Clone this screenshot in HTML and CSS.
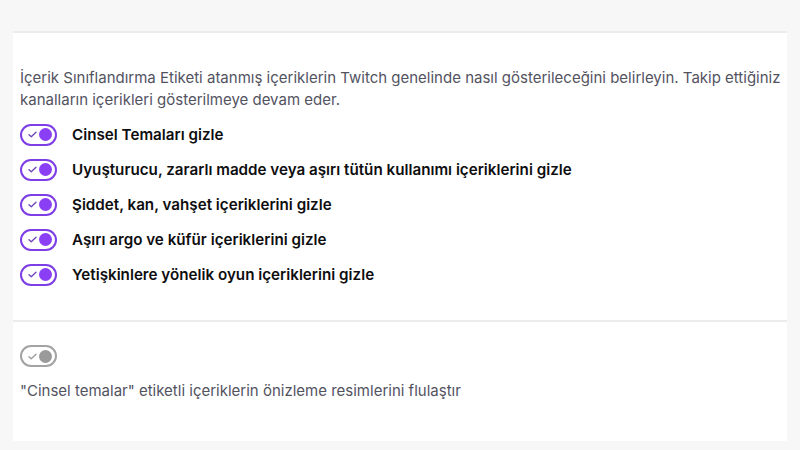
FILE: index.html
```html
<!DOCTYPE html>
<html lang="tr">
<head>
    <meta charset="UTF-8">
    <meta name="viewport" content="width=device-width, initial-scale=1.0">
    <title>İçerik Sınıflandırma Etiketleri</title>
    <link rel="stylesheet" href="styles.css">
</head>
<body>
    <div class="card">
        <section class="section">
            <p class="desc">İçerik Sınıflandırma Etiketi atanmış içeriklerin Twitch genelinde nasıl gösterileceğini belirleyin. Takip ettiğiniz kanalların içerikleri gösterilmeye devam eder.</p>

            <ul class="toggle-list">
                <li class="toggle-row">
                    <span class="toggle on">
                        <svg class="check" viewBox="0 0 10 8"><path d="M1 4.2 L3.6 6.6 L9 1.4"/></svg>
                        <span class="knob"></span>
                    </span>
                    <span class="label">Cinsel Temaları gizle</span>
                </li>
                <li class="toggle-row">
                    <span class="toggle on">
                        <svg class="check" viewBox="0 0 10 8"><path d="M1 4.2 L3.6 6.6 L9 1.4"/></svg>
                        <span class="knob"></span>
                    </span>
                    <span class="label">Uyuşturucu, zararlı madde veya aşırı tütün kullanımı içeriklerini gizle</span>
                </li>
                <li class="toggle-row">
                    <span class="toggle on">
                        <svg class="check" viewBox="0 0 10 8"><path d="M1 4.2 L3.6 6.6 L9 1.4"/></svg>
                        <span class="knob"></span>
                    </span>
                    <span class="label">Şiddet, kan, vahşet içeriklerini gizle</span>
                </li>
                <li class="toggle-row">
                    <span class="toggle on">
                        <svg class="check" viewBox="0 0 10 8"><path d="M1 4.2 L3.6 6.6 L9 1.4"/></svg>
                        <span class="knob"></span>
                    </span>
                    <span class="label">Aşırı argo ve küfür içeriklerini gizle</span>
                </li>
                <li class="toggle-row">
                    <span class="toggle on">
                        <svg class="check" viewBox="0 0 10 8"><path d="M1 4.2 L3.6 6.6 L9 1.4"/></svg>
                        <span class="knob"></span>
                    </span>
                    <span class="label">Yetişkinlere yönelik oyun içeriklerini gizle</span>
                </li>
            </ul>
        </section>

        <section class="section blur-section">
            <span class="toggle disabled">
                <svg class="check" viewBox="0 0 10 8"><path d="M1 4.2 L3.6 6.6 L9 1.4"/></svg>
                <span class="knob"></span>
            </span>
            <p class="desc">"Cinsel temalar" etiketli içeriklerin önizleme resimlerini flulaştır</p>
        </section>
    </div>
</body>
</html>
```

FILE: styles.css
```css
body {
    margin: 0;
    background-color: #f7f7f8;
    font-family: Inter, "Noto Sans", sans-serif;
    font-size: 14px;
    color: #0e0e10;
}
.card {
    margin: 31px 13px 0 13px;
    background-color: #fff;
    border-top: 2px solid #ececec;
    height: 408px;
}
.section {
    padding: 34px 0 28px 7px;
}
.desc {
    margin: 0;
    font-size: 15px;
    line-height: 22px;
    color: #53535f;
}
.toggle-list {
    list-style: none;
    margin: 6px 0 0;
    padding: 0;
}
.toggle-row {
    display: flex;
    align-items: center;
    height: 35px;
}
.label {
    margin-left: 15px;
    font-size: 15.2px;
    font-weight: 600;
    color: #0e0e10;
}
.toggle {
    display: flex;
    align-items: center;
    justify-content: space-between;
    box-sizing: border-box;
    width: 37px;
    height: 22px;
    padding: 0 3px 0 6px;
    border: 2px solid #7d3ee6;
    border-radius: 11px;
    flex-shrink: 0;
}
.check {
    width: 9px;
    height: 7px;
    fill: none;
    stroke: #6e45b8;
    stroke-width: 1.5;
    stroke-linecap: round;
    stroke-linejoin: round;
}
.knob {
    width: 13px;
    height: 13px;
    border-radius: 50%;
    background-color: #8a3ff5;
}
.blur-section {
    border-top: 2px solid #ececec;
    padding-top: 23px;
}
.blur-section .toggle {
    border-color: #a3a3a3;
    margin-bottom: 13px;
}
.blur-section .check {
    stroke: #9a9a9a;
}
.blur-section .knob {
    background-color: #9a9a9a;
}
```
